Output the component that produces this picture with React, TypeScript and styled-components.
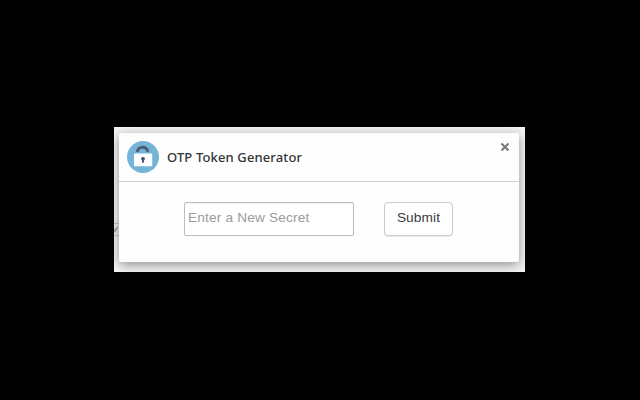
import React from 'react';
import styled, { createGlobalStyle } from 'styled-components';

const GlobalStyle = createGlobalStyle`
  * { box-sizing: border-box; }
  html, body { margin: 0; background: #000; overflow: hidden; }
`;

const Page = styled.main`
  width: 640px;
  height: 400px;
  padding: 127px 115px 128px 114px;
  background: #000;
`;

const Backdrop = styled.div`
  position: relative;
  width: 411px;
  height: 145px;
  padding: 6px 6px 10px 5px;
  background: #f5f5f5;
  overflow: hidden;
`;

const EdgeMark = styled.svg`
  position: absolute;
  left: 0;
  top: 96px;
`;

const Dialog = styled.section`
  position: relative;
  width: 400px;
  height: 129px;
  background: #fefefe;
  border-radius: 2px;
  box-shadow: 0 3px 12px rgba(0, 0, 0, 0.42);
`;

const Header = styled.header`
  display: flex;
  align-items: flex-start;
  height: 49px;
  padding: 8px 9px 0 8px;
  border-bottom: 1px solid #cfcfcf;
`;

const Title = styled.h1`
  flex: 1;
  margin: 7px 0 0 8px;
  font: 500 13px/18px "Noto Sans", sans-serif;
  letter-spacing: 0.13px;
  color: #333;
  white-space: nowrap;
`;

const CloseButton = styled.button`
  display: flex;
  margin: 1px 0 0;
  padding: 0;
  border: 0;
  background: none;
`;

const Form = styled.form`
  display: flex;
  align-items: flex-start;
  gap: 30px;
  padding: 20px 65px 0;
`;

const SecretInput = styled.input`
  width: 170px;
  height: 34px;
  padding: 0 3px 4px;
  border: 1px solid #bdbdbd;
  border-radius: 2px;
  background: #fff;
  box-shadow: inset 0 1px 1px rgba(0, 0, 0, 0.06);
  font: 13.7px "Liberation Sans", sans-serif;
  letter-spacing: 0.15px;
  color: #444;
  outline: 0;
  &::placeholder { color: #9b9b9b; opacity: 1; }
`;

const SubmitButton = styled.button`
  width: 69px;
  height: 34px;
  padding: 0 0 4px;
  border: 1px solid #cbcbcb;
  border-radius: 4px;
  background: #fff;
  box-shadow: 0 1px 0 #e8e8e8;
  font: 13.7px "Liberation Sans", sans-serif;
  letter-spacing: 0.1px;
  color: #3c3c3c;
`;

const LockLogo = () => (
  <svg width="32" height="32" viewBox="0 0 32 32" aria-hidden="true">
    <circle cx="16" cy="16" r="16" fill="#76b4d7" />
    <path d="M10.6 10.8C10.3 8.2 12.5 6.3 15.6 6.3c2.8 0 4.7 1.5 5.2 4.4" fill="none" stroke="#495b75" strokeWidth="2.9" />
    <rect x="7" y="12.5" width="18.2" height="12.7" rx="1" fill="#fdfeff" />
    <circle cx="16" cy="17.8" r="1.9" fill="#424f69" />
    <path d="M15.1 18h1.8v3.8h-1.8z" fill="#424f69" />
  </svg>
);

export default function App() {
  return (
    <>
      <GlobalStyle />
      <Page>
        <Backdrop>
          <EdgeMark width="5" height="14" viewBox="0 0 5 14" aria-hidden="true">
            <path d="M0 .5h5M0 12.5h5" stroke="#ccc" />
            <path d="M0 6.5L4 3v2L1 9.5H0z" fill="#aaa" />
          </EdgeMark>
          <Dialog>
            <Header>
              <LockLogo />
              <Title>OTP Token Generator</Title>
              <CloseButton aria-label="Close">
                <svg width="10" height="10" viewBox="0 0 10 10">
                  <path d="M1.5 1.5L8.5 8.5M8.5 1.5L1.5 8.5" stroke="#777" strokeWidth="2.1" />
                </svg>
              </CloseButton>
            </Header>
            <Form onSubmit={(event) => event.preventDefault()}>
              <SecretInput placeholder="Enter a New Secret" />
              <SubmitButton>Submit</SubmitButton>
            </Form>
          </Dialog>
        </Backdrop>
      </Page>
    </>
  );
}
